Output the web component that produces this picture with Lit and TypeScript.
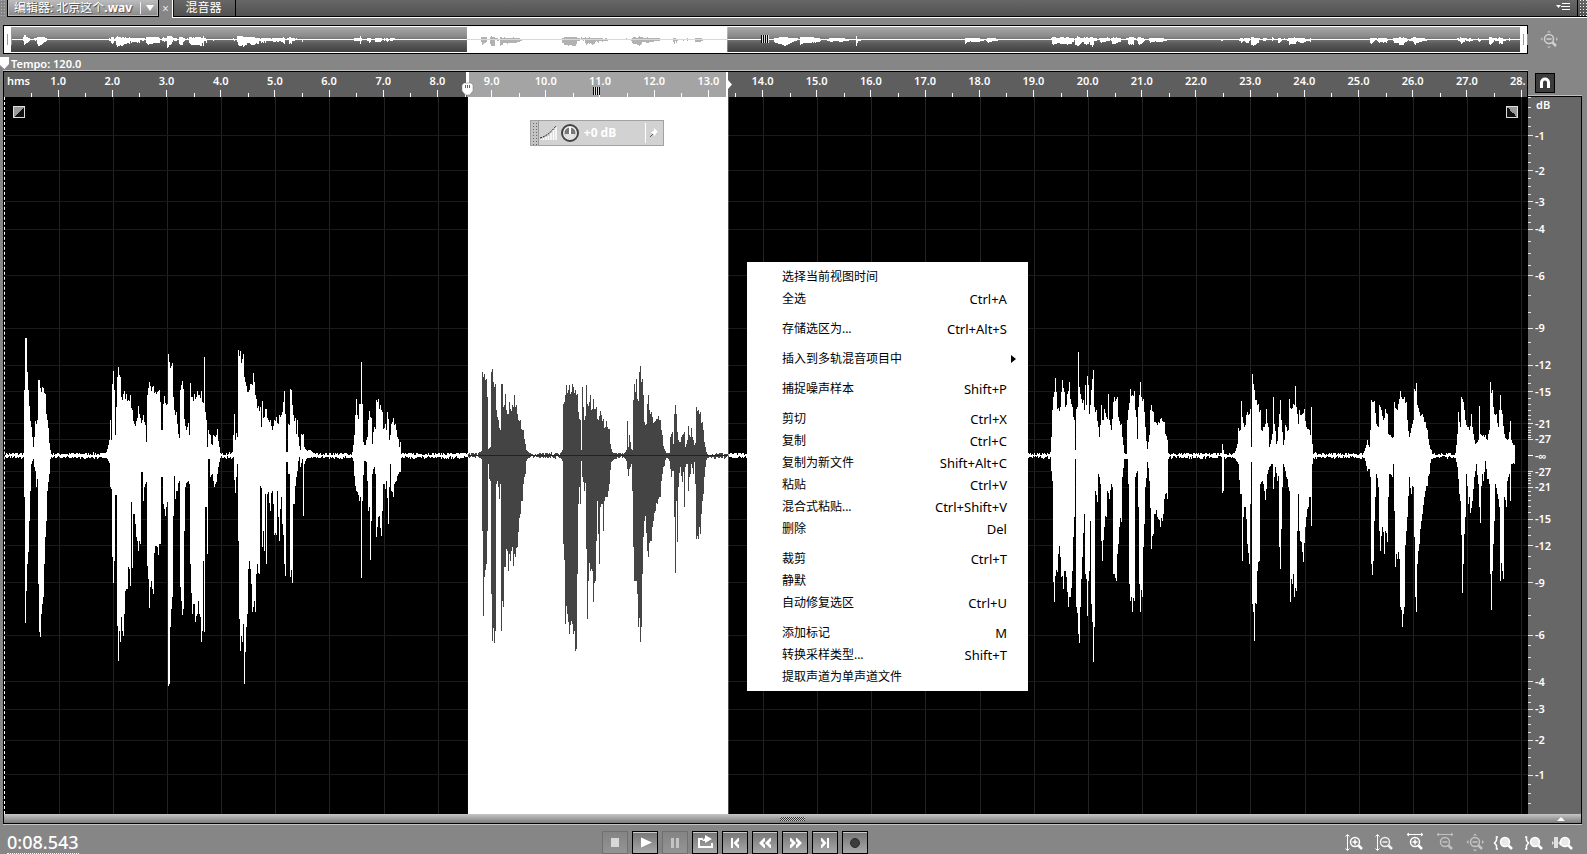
import { LitElement, html, svg, css, nothing } from "lit";
import { customElement, state } from "lit/decorators.js";

const DURATION = 28.11;
const SELECTION = { start: 8.545, end: 13.35 };
const VIEW_W = 4569;
const VIEW_H = 2148;
const COLUMN = 3;
const pct = (t: number) => (t / DURATION) * 100;

/* Envelopes of the spoken phrases: upper and lower outline as x,y pairs around a middle line. */
interface Phrase { x: number; sx: number; mid: number; top: string; bottom: string; }
const left = (top: string, bottom: string): Phrase => ({ x: -15, sx: 1, mid: 375, top, bottom });
const middle = (top: string, bottom: string): Phrase => ({ x: 1365, sx: 1, mid: 345, top, bottom });
const right = (top: string, bottom: string): Phrase => ({ x: 3060, sx: 1.0753, mid: 375, top, bottom });

const PHRASES: Phrase[] = [
  left(
    "72,350 73,180 75,180 76,22 80,22 81,125 85,180 89,228 93,290 97,320 100,350 104,320 107,272 112,270 114,180 116,150 119,150 121,172 126,170 130,172 136,190 140,250 146,292 150,360",
    "72,500 75,505 76,876 78,780 82,700 84,665 88,570 92,480 95,400 100,385 105,420 109,470 112,445 114,760 117,770 119,905 122,918 125,850 130,800 134,700 138,570 143,480 148,430 150,385"),
  left(
    "320,365 328,330 331,268 334,330 336,160 339,122 342,180 345,315 349,230 351,140 356,110 360,140 364,200 372,183 378,192 386,208 391,195 396,240 404,282 410,272 416,228 420,262 426,270 428,330 431,255 435,285 438,335 441,335 442,195 448,155 452,168 460,168 466,185 472,185 477,178 482,215 484,300 488,300 490,220 492,198 500,225 504,215 505,72 507,95 513,108 517,98 521,200 524,240 530,245 535,310 540,318 541,180 547,152 550,175 553,265 560,300 564,278 570,318 571,158 573,200 583,192 592,182 597,195 604,183 608,215 612,215 613,80 615,245 619,270 622,350 625,298 630,315 636,345 640,315 648,315 653,295 657,350 661,368",
    "320,380 330,400 332,470 337,480 338,680 340,758 343,690 345,492 350,492 351,520 353,885 356,990 360,935 363,860 366,900 370,915 374,850 378,775 383,775 385,710 391,765 394,515 397,712 400,550 404,550 410,620 416,662 420,640 423,425 428,425 430,510 434,470 437,460 441,460 443,705 448,832 452,770 460,790 465,645 470,645 475,672 482,640 484,440 488,440 490,520 496,555 500,530 504,530 506,1065 509,1060 512,890 518,800 522,435 526,505 532,480 537,450 540,520 541,770 546,852 549,835 552,600 556,470 562,455 569,460 571,700 576,850 580,820 586,875 592,850 600,860 604,935 607,900 609,690 613,905 615,530 620,530 621,670 622,385 628,385 632,440 637,430 643,470 650,455 656,410 661,378"),
  left(
    "698,365 703,250 706,330 709,308 713,320 714,58 718,78 722,62 727,85 731,70 735,155 740,168 746,185 750,160 755,160 760,127 763,155 768,205 775,228 780,230 783,290 787,212 790,262 796,235 800,235 803,262 812,270 818,300 824,268 830,260 834,280 838,255 845,255 851,215 854,182 857,250 860,365 864,365 865,280 870,280 871,175 875,180 880,255 885,262 888,310 892,268 895,320 900,360 905,310 911,310 913,350 920,360 930,358 945,370",
    "700,380 705,480 707,488 710,440 713,400 715,630 718,865 722,960 726,935 730,880 733,1060 737,965 742,850 745,715 752,715 757,845 765,845 770,730 779,730 781,465 786,480 787,650 790,600 794,660 797,490 799,700 802,490 806,485 810,540 816,480 820,520 823,490 824,612 828,612 832,480 838,630 843,500 848,580 853,700 857,735 860,395 864,395 866,430 870,440 872,740 877,757 880,520 884,520 888,440 892,420 897,380 902,410 907,385 910,555 912,400 920,385 945,378"),
  left(
    "1058,365 1065,300 1066,255 1069,205 1072,255 1078,255 1079,220 1082,220 1084,95 1086,220 1089,335 1095,345 1101,320 1104,270 1108,242 1113,262 1116,340 1122,290 1128,290 1129,210 1134,205 1138,235 1142,225 1148,245 1150,295 1155,280 1158,300 1162,245 1166,265 1169,330 1175,280 1180,262 1185,280 1190,300 1195,325 1199,350 1201,335 1205,370",
    "1060,390 1065,465 1070,480 1078,510 1083,515 1085,742 1088,510 1092,390 1098,395 1103,450 1104,540 1110,545 1112,688 1115,570 1118,430 1122,410 1127,430 1129,620 1133,590 1137,555 1144,615 1147,540 1150,460 1156,475 1160,450 1165,580 1168,470 1171,400 1174,480 1180,500 1184,460 1190,450 1194,430 1200,425 1205,380"),
  middle(
    "55,338 66,330 67,95 72,100 76,120 80,115 83,170 86,325 92,320 93,95 97,85 99,125 103,140 106,130 109,210 115,240 120,270 123,270 124,130 127,130 130,200 134,195 136,160 139,210 145,220 147,185 152,205 157,195 161,200 164,165 168,195 173,220 180,240 185,265 191,270 195,310 200,330 210,340",
    "55,350 65,355 68,570 70,825 74,710 80,670 82,570 84,370 87,415 92,420 94,760 97,900 103,908 106,870 108,430 113,420 118,475 122,430 123,760 125,870 129,800 131,700 135,680 139,625 145,690 150,660 155,630 161,675 166,650 172,620 175,575 180,520 186,480 190,430 195,400 200,360 210,348"),
  middle(
    "300,338 308,330 310,190 315,165 320,135 325,150 329,135 333,155 338,130 345,150 350,165 353,160 356,215 360,240 364,330 366,330 367,140 370,200 374,240 378,215 379,135 383,190 387,185 391,165 395,210 400,175 405,205 410,200 414,240 420,212 425,225 430,235 435,260 440,242 447,265 452,310 456,335 475,340",
    "300,350 308,360 310,610 315,700 316,850 321,820 325,845 329,880 334,840 340,880 346,930 350,925 352,700 354,490 358,440 361,490 364,360 368,410 374,450 378,430 379,625 382,835 386,720 390,640 392,690 396,690 400,785 405,720 409,600 412,480 415,580 418,670 421,500 426,490 430,570 433,480 437,470 443,470 449,430 453,365 475,348"),
  middle(
    "490,340 500,330 502,242 504,320 509,285 514,325 518,330 519,180 522,130 526,155 529,115 532,175 537,160 538,95 541,78 546,115 549,165 553,245 558,250 561,190 565,165 568,210 575,215 582,245 588,235 595,228 602,240 606,285 612,325 620,338 628,338 631,290 636,275 641,310 643,220 647,195 650,220 654,300 660,305 666,285 672,275 676,320 682,300 685,258 690,290 695,262 699,300 704,315 708,300 709,200 715,210 720,215 726,245 731,270 735,320 742,340",
    "490,350 500,360 504,405 510,380 516,370 518,450 520,620 524,720 532,760 536,860 540,903 544,860 548,700 552,540 557,525 561,630 565,650 570,600 574,600 580,540 585,510 592,490 600,470 604,420 612,375 620,348 628,360 634,410 639,390 642,530 646,698 649,480 652,605 656,440 660,380 666,425 672,390 674,500 677,380 681,370 685,450 690,400 695,370 700,400 704,365 707,430 709,595 715,595 720,580 725,520 731,460 735,380 742,348"),
  middle(
    "935,340 945,250 955,190 965,140 985,150 1000,200 1015,250 1021,320 1023,120 1060,160 1080,200 1086,290 1100,320 1115,230 1150,240 1170,280 1188,300 1192,80 1196,260 1215,300 1255,335",
    "935,350 942,430 948,640 962,760 980,900 996,620 1010,480 1021,370 1023,780 1040,650 1080,600 1086,400 1100,380 1115,560 1130,480 1150,550 1170,430 1190,420 1193,940 1197,480 1215,400 1255,350"),
  middle(
    "1515,335 1520,200 1545,180 1565,260 1580,300 1587,190 1605,240 1640,330",
    "1515,350 1518,690 1530,520 1560,560 1578,400 1587,640 1600,500 1620,430 1640,350"),
  right(
    "70,365 75,320 76,240 80,200 84,142 88,185 92,235 98,230 101,185 105,150 109,185 114,230 119,190 124,155 128,205 133,230 137,270 140,370 142,360 144,235 147,230 149,65 151,170 156,190 162,210 165,240 168,165 171,225 174,138 178,165 181,250 185,180 188,145 191,118 194,230 200,240 204,290 209,320 213,225 217,270 223,235 230,265 233,190 237,270 242,300 247,215 251,200 257,200 261,260 268,280 273,320 277,370 285,370 287,270 290,240 294,175 305,182 310,260 314,325 318,230 320,195 323,155 326,200 332,205 336,290 341,355 347,315 349,240 353,225 358,245 363,275 372,275 380,262 388,275 393,310 398,330 400,368",
    "70,380 76,450 79,755 82,815 86,735 91,725 93,670 99,680 101,740 107,775 113,720 118,785 122,830 128,800 133,720 137,560 140,385 143,440 145,830 149,910 152,938 156,830 161,680 166,550 170,730 175,855 179,720 182,570 185,820 191,993 193,890 196,480 202,515 206,430 211,460 213,630 217,692 222,590 227,560 230,480 236,505 241,460 245,470 247,730 255,752 260,640 264,590 270,575 273,440 277,385 285,385 290,460 292,760 294,810 300,845 305,810 309,440 314,420 317,530 319,760 323,845 327,800 332,650 337,470 343,395 348,450 353,655 358,610 362,550 370,560 378,590 385,570 391,490 398,505 400,385"),
  right("549,372 551,340 553,360 556,372", "549,378 551,487 553,480 556,378"),
  right(
    "585,368 594,340 596,292 601,300 604,212 608,260 613,290 618,255 622,245 625,250 629,235 631,350 634,350 635,130 640,180 645,210 651,220 656,240 660,300 665,290 670,280 673,235 678,290 683,350 690,310 693,200 697,280 703,340 708,290 712,208 716,270 722,345 728,285 735,300 738,205 743,235 748,220 752,225 755,168 759,250 765,290 767,240 773,250 780,235 785,290 795,300 798,320 800,230 803,340 806,370",
    "585,382 596,400 600,490 604,490 606,690 611,530 616,530 620,640 625,700 629,520 632,395 634,560 636,820 640,930 645,820 650,720 655,690 658,460 665,460 672,508 677,430 684,405 690,400 694,475 698,410 705,450 709,430 711,650 714,715 718,470 722,400 730,440 737,480 740,815 745,760 749,730 753,800 757,780 760,600 762,490 765,600 770,630 777,695 783,590 790,530 796,500 800,585 803,400 806,382"),
  right(
    "945,368 952,345 955,330 960,350 964,300 966,210 976,212 981,280 987,290 990,225 996,240 1000,270 1006,235 1012,250 1015,310 1021,315 1028,320 1032,215 1037,235 1043,220 1047,183 1053,205 1058,200 1064,215 1067,270 1073,320 1080,280 1086,250 1088,175 1092,158 1096,225 1102,245 1110,250 1116,275 1123,300 1128,345 1133,360",
    "948,382 955,420 960,415 965,440 966,700 969,733 973,690 977,500 981,430 987,470 990,600 993,660 998,590 1003,670 1007,600 1011,635 1014,500 1018,430 1024,440 1028,400 1032,540 1034,710 1038,685 1045,685 1049,830 1054,888 1058,830 1063,600 1068,560 1072,440 1077,490 1083,470 1087,620 1089,800 1092,845 1096,700 1100,640 1107,570 1115,500 1122,465 1128,430 1133,385"),
  right(
    "1200,368 1208,310 1210,245 1214,290 1219,200 1224,215 1229,270 1236,290 1241,300 1246,250 1250,310 1257,340 1264,330 1268,228 1272,310 1279,315 1285,315 1290,330 1295,300 1298,155 1303,180 1308,230 1315,250 1320,290 1324,240 1327,195 1330,240 1333,250 1337,310 1345,330 1350,325 1354,272 1358,330 1365,345 1371,350 1375,335 1380,360 1388,372",
    "1200,382 1208,410 1211,490 1216,510 1220,787 1223,700 1228,560 1232,430 1237,520 1240,500 1244,548 1248,510 1255,440 1260,400 1264,460 1270,577 1275,430 1280,450 1285,390 1290,445 1296,460 1298,730 1301,838 1305,720 1309,570 1312,460 1318,490 1323,530 1325,400 1327,750 1331,720 1335,745 1338,500 1343,530 1347,450 1352,430 1355,510 1358,400 1365,400 1374,415 1380,385 1388,378"),
];

type Point = [number, number];

/* Height of an outline within one drawn column: its peak there, or the line between neighbours. */
function columnHeight(points: Point[], from: number, jitter: number): number {
  const inside = points.filter(([x]) => x >= from && x < from + COLUMN);
  if (inside.length) return Math.max(...inside.map(([, h]) => h));
  const at = from + COLUMN / 2;
  const i = points.findIndex(([x]) => x > at);
  if (i < 1) return 0;
  const [x0, h0] = points[i - 1];
  const [x1, h1] = points[i];
  return (h0 + ((h1 - h0) * (at - x0)) / (x1 - x0)) * (1 - jitter * 0.1);
}

function buildWave(): string {
  const mid = VIEW_H / 2;
  const count = Math.ceil(4530 / COLUMN);
  let seed = 7;
  const rnd = () => (seed = (seed * 16807) % 2147483647) / 2147483647;
  const up = Array.from({ length: count }, () => 1 + rnd() * 8);
  const down = Array.from({ length: count }, () => 2 + rnd() * 8);
  for (const p of PHRASES) {
    const read = (s: string, sign: number): Point[] =>
      s.split(" ").map((pair) => {
        const [x, y] = pair.split(",").map(Number);
        return [p.x + x * p.sx, (y - p.mid) * sign];
      });
    const top = read(p.top, -1);
    const bottom = read(p.bottom, 1);
    const first = Math.floor(top[0][0] / COLUMN);
    const last = Math.ceil(top[top.length - 1][0] / COLUMN);
    for (let c = first; c <= last && c < count; c++) {
      up[c] = Math.max(up[c], columnHeight(top, c * COLUMN, rnd()));
      down[c] = Math.max(down[c], columnHeight(bottom, c * COLUMN, rnd()));
    }
  }
  let d = `M0 ${mid}`;
  up.forEach((h, c) => (d += `V${(mid - h).toFixed(1)}H${(c + 1) * COLUMN}`));
  for (let c = count - 1; c >= 0; c--) d += `V${(mid + down[c]).toFixed(1)}H${c * COLUMN}`;
  return d + "Z";
}
const WAVE = buildWave();

const DB_LABELS = [1, 2, 3, 4, 6, 9, 12, 15, 21, 27];
const DB_MINOR: number[] = [];
for (let d = 0; d < 27; d += d < 4 ? 0.25 : d < 6 ? 0.5 : 1) DB_MINOR.push(d);
const amp = (db: number) => 50 * Math.pow(10, -db / 20);

interface Item { label: string; key?: string; sub?: boolean; end?: boolean; }
const MENU: Item[] = [
  { label: "选择当前视图时间" },
  { label: "全选", key: "Ctrl+A", end: true },
  { label: "存储选区为...", key: "Ctrl+Alt+S", end: true },
  { label: "插入到多轨混音项目中", sub: true, end: true },
  { label: "捕捉噪声样本", key: "Shift+P", end: true },
  { label: "剪切", key: "Ctrl+X" },
  { label: "复制", key: "Ctrl+C" },
  { label: "复制为新文件", key: "Shift+Alt+C" },
  { label: "粘贴", key: "Ctrl+V" },
  { label: "混合式粘贴...", key: "Ctrl+Shift+V" },
  { label: "删除", key: "Del", end: true },
  { label: "裁剪", key: "Ctrl+T" },
  { label: "静默" },
  { label: "自动修复选区", key: "Ctrl+U", end: true },
  { label: "添加标记", key: "M" },
  { label: "转换采样类型...", key: "Shift+T" },
  { label: "提取声道为单声道文件" },
];

const TRANSPORT = [
  { name: "停止", off: true, icon: svg`<rect x="8" y="6" width="8" height="9" fill="#d8d8d8"/>` },
  { name: "播放", off: false, icon: svg`<path d="M8 5.500L19 10.500L8 15.500Z" fill="#fff"/>` },
  { name: "暂停", off: true, icon: svg`<path d="M8 6h3v10H8zM13 6h3v10h-3z" fill="#c4c4c4"/>` },
  { name: "循环播放", off: false, icon: svg`<path d="M10 7H6V15H19V11" fill="none" stroke="#fff" stroke-width="2"/><path d="M9 9l3-3V3l7 4l-7 4V9z" fill="#fff"/>` },
  { name: "移到上一个", off: false, icon: svg`<path d="M8 6h2v10H8zM16 6v3L14 11l2 2v3h-1L10.500 11l4.500-5z" fill="#fff"/>` },
  { name: "倒放", off: false, icon: svg`<path d="M12 6v3L10 11l2 2v3h-1L6 11l5-5zM18 6v3L16 11l2 2v3h-1L12 11l5-5z" fill="#fff"/>` },
  { name: "快进", off: false, icon: svg`<path d="M7 6v3L9 11l-2 2v3h1L13 11l-5-5zM13 6v3L15 11l-2 2v3h1L19 11l-5-5z" fill="#fff"/>` },
  { name: "移到下一个", off: false, icon: svg`<path d="M14 6h2v10h-2zM8 6v3L10 11l-2 2v3h1L13.500 11L9 6z" fill="#fff"/>` },
  { name: "录制", off: false, icon: svg`<circle cx="12" cy="11" r="4.500" fill="#3c3c3c" stroke="#2a2a2a"/>` },
];

const lens = (sign: string, color: string) => svg`
  <circle cx="13" cy="10" r="4.500" fill=${sign === "" ? "#e8e8e8" : "none"} stroke=${color} stroke-width="1.500"/>
  <path d="M16.500 13.500L20 17" stroke=${color} stroke-width="2.500"/>
  <path d=${sign} stroke=${color} stroke-width="1.500"/>`;
const PLUS = "M10.500 10h5M13 7.500v5";
const MINUS = "M10.500 10h5";
const ARROWS_V = svg`<path d="M5.500 3v15M3.500 4.500l2-2l2 2M3.500 16.500l2 2l2-2" fill="none" stroke="#fff"/>`;
const arrowsH = (c: string) => svg`<path d="M5 2.500h16M7 1L5 2.500L7 4M19 1l2 1.500L19 4" fill="none" stroke=${c}/>`;
const CROSS = (c: string) => svg`<path d="M11 3.500l2-2l2 2zM11 17.500l2 2l2-2zM6.500 8l-2 2l2 2zM20 8l2 2l-2 2z" fill=${c}/>`;

const ZOOMS = [
  { name: "放大（振幅）", icon: svg`${ARROWS_V}${lens(PLUS, "#fff")}` },
  { name: "缩小（振幅）", icon: svg`${ARROWS_V}${lens(MINUS, "#f0f0f0")}` },
  { name: "放大（时间）", icon: svg`${arrowsH("#fff")}${lens(PLUS, "#fff")}` },
  { name: "缩小（时间）", icon: svg`${arrowsH("#c0c0c0")}${lens(MINUS, "#c0c0c0")}` },
  { name: "全部缩小", icon: svg`${CROSS("#c4c4c4")}${lens(MINUS, "#c4c4c4")}` },
  { name: "放大入点", icon: svg`<path d="M6 5H4.500v3.500L2.500 11l2 2.500V17H6" fill="none" stroke="#fff" stroke-width="1.500"/>${lens("", "#fff")}` },
  { name: "放大出点", icon: svg`<path d="M3 5h1.500v3.500L6.500 11l-2 2.500V17H3" fill="none" stroke="#fff" stroke-width="1.500"/>${lens("", "#fff")}` },
  { name: "缩放至选区", icon: svg`<path d="M2 5h4v11H2zM-1 8v6l3-3zM9 8v6l-3-3z" fill="#e0e0e0"/>${lens("", "#fff")}` },
];

@customElement("app-root")
export class AppRoot extends LitElement {
  static styles = css`
    :host {
      display: flex; flex-direction: column; height: 100vh; min-height: 600px; overflow: hidden;
      background: #868686; color: #fff;
      font: 600 11px/16px "Noto Sans", "Noto Sans CJK SC", sans-serif;
    }
    * { box-sizing: border-box; }
    button { font: inherit; color: inherit; background: none; border: 0; padding: 0; margin: 0; cursor: default; }
    svg { display: block; }
    .tabs { display: flex; height: 18px; flex: none; font-size: 12px; font-weight: 400; }
    .grip { width: 7px; background: radial-gradient(circle, #ddd 0 1px, transparent 1px) 0 2px / 3px 3px; opacity: .6; }
    .tab-main { display: flex; border: 1px solid #000; border-top: 0; outline: 1px solid #b8b8b8; outline-offset: -2px;
      width: 152px; height: 17px; background: linear-gradient(#bcbcbc, #898989); }
    .tab-name { flex: 1; text-align: left; padding-left: 6px; line-height: 16px; white-space: nowrap; text-shadow: 1px 1px 0 #555; }
    .drop { width: 18px; border-left: 1px solid #eee; display: grid; place-items: center; margin: 2px 0; }
    .close { width: 13px; line-height: 14px; color: #e4e4e4; }
    .strip { flex: 1; display: flex; border-left: 1px solid #fff; border-bottom: 1px solid #fff; }
    .strip-in { flex: 1; display: flex; border-left: 1px solid #111; border-bottom: 1px solid #000;
      background: linear-gradient(#676767, #515151); }
    .tab-other { width: 62px; border-right: 1px solid #000; line-height: 16px; padding-right: 2px; }
    .panel-menu { margin-left: auto; width: 28px; border-right: 1px solid #000; padding-left: 6px; }
    .end-grip { width: 9px; background: radial-gradient(circle, #eee 0 1px, transparent 1px) 4px 2px / 3px 3px; }
    .panel { flex: 1; min-height: 0; display: grid; padding: 7px 5px 0 3px;
      grid-template-columns: minmax(0, 1fr) 54px; grid-template-rows: 29px 17px 26px minmax(0, 1fr) 11px; }
    .overview { position: relative; border: 1px solid #000; background: #fff; padding: 1px 0; }
    .overview-in { height: 100%; background: linear-gradient(#a8a8a8, #8c8c8c 35%, #5c5c5c 65%, #404040); }
    .stretch { width: 100%; height: 100%; }
    .handle { position: absolute; top: 0; bottom: 0; width: 7px; background: #fff; left: 0; }
    .handle::after { content: ""; position: absolute; left: 3px; top: 8px; bottom: 8px; width: 3px; border: 1px solid #999; border-width: 0 1px; }
    .handle-end { left: auto; right: 0; }
    .ticks3 { position: absolute; width: 8px; height: 8px; background: repeating-linear-gradient(90deg, #000 0 1px, #ddd 1px 2px); }
    .on-overview { top: 9px; left: 49.700%; }
    .on-ruler { bottom: 2px; left: 38.700%; width: 7px; }
    .fit { display: grid; place-items: center; padding-right: 14px; }
    .tempo { grid-column: 1 / -1; padding-left: 8px; line-height: 19px; position: relative; }
    .pin { position: absolute; left: -3px; top: 3px; z-index: 2; }
    .ruler { position: relative; display: grid; background: #5e5e5e; border: 1px solid #000; border-bottom: 0;
      box-shadow: 0 -1px 0 #c4c4c4;
      grid-template-columns: minmax(0, .5fr) repeat(27, minmax(0, 1fr)) minmax(0, .61fr); }
    .range { position: absolute; top: 0; bottom: 0; background: #a4a4a4; }
    .cell { position: relative; text-align: center; line-height: 18px; white-space: nowrap;
      background: linear-gradient(#fff, #fff) 50% 100% / 1px 7px no-repeat, linear-gradient(#fff, #fff) 0 100% / 1px 4px no-repeat; }
    .cell-first { background: none; text-align: left; padding-left: 3px; }
    .cell-last { text-align: left; padding-left: 16px; background-position: 27px 100%, 0 100%; }
    .snap-box { padding: 2px 0 0 7px; }
    .snap { width: 20px; height: 20px; background: #3c3c3c; border: 1px solid #000; display: grid; place-items: center; }
    .stage-wrap { position: relative; border-left: 1px solid #000; background: #000; }
    .edge { position: absolute; left: 0; top: 0; bottom: 0; border-left: 1px dashed #fff; z-index: 1; }
    .stage { padding-left: 1px; height: 100%; }
    .corner { position: absolute; top: 9px; width: 12px; height: 12px; border: 1px solid #ddd;
      background: linear-gradient(135deg, #999 50%, #111 50%); }
    .corner-l { left: 9px; }
    .corner-r { right: 10px; background: linear-gradient(45deg, #111 50%, #999 50%); }
    .mark { position: absolute; top: 0; z-index: 1; }
    .db { background: #676767; border-right: 1px solid #000; border-top: 1px solid #000; box-shadow: 0 -1px 0 #c0c0c0; margin-top: -1px; }
    .db text { fill: #fff; font: 600 11px "Noto Sans", sans-serif; }
    .hud { position: absolute; left: 34.500%; top: 23px; width: 134px; height: 26px; display: flex; align-items: center;
      border: 1px solid #a2a2a2; background: #d2d2d2; }
    .hud-grip { width: 8px; height: 100%; border-right: 1px solid #999; background: radial-gradient(circle, #666 0 1px, transparent 1px) 1px 1px / 3px 3px #c4c4c4; }
    .hud-value { flex: 1; font: 700 12px/16px "Noto Sans", sans-serif; padding-left: 3px; text-align: left; }
    .hud-pin { border-left: 1px solid #fff; width: 18px; height: 20px; display: grid; place-items: center; }
    .menu { position: absolute; left: 48.750%; top: 165px; width: 281px; background: #fff; color: #000; padding: 4px 0 3px;
      font: 400 12px/22px "Noto Sans", "Noto Sans CJK SC", sans-serif; display: flex; flex-direction: column; z-index: 3; }
    .item { display: flex; justify-content: space-between; align-items: center; height: 22px; padding: 0 21px 0 35px; white-space: nowrap; }
    .item:hover { background: #eee; }
    .key { font-size: 13px; }
    .group-end { margin-bottom: 8px; }
    .item-sub { padding-right: 12px; }
    .scroll { grid-column: 1 / -1; display: flex; align-items: center; border: 1px solid #000; border-top: 0; margin-bottom: 1px;
      box-shadow: 0 1px 0 #c4c4c4; background: linear-gradient(#c6c6c6, #7c7c7c); }
    .scroll-grip { width: 25px; height: 4px; margin-left: 49.200%; background: repeating-conic-gradient(#333 0 25%, #ccc 0 50%) 0 0 / 2px 2px; }
    .scroll-up { margin-left: auto; width: 40px; display: grid; place-items: center; }
    .foot { flex: none; display: grid; grid-template-columns: 38.150% auto 1fr; height: 29px; padding-right: 9px; }
    .time { padding: 7px 0 0 7px; }
    .time-value { font: 500 18px/21px "Noto Sans", sans-serif; border-bottom: 1px dotted #fff; }
    .transport { display: flex; gap: 4px; padding-top: 6px; }
    .tbtn { width: 26px; height: 23px; border: 1px solid #000; box-shadow: inset 0 1px 0 #ccc;
      background: linear-gradient(#747474, #a8a8a8); }
    .tbtn-off { border-color: #707070; box-shadow: none; background: linear-gradient(#848484, #949494); }
    .zooms { display: flex; justify-content: flex-end; gap: 4px; padding-top: 7px; }
    .zbtn { width: 26px; height: 21px; }
  `;

  @state() private snapping = true;

  private wave(kind: "main" | "over") {
    const a = (pct(SELECTION.start) / 100) * VIEW_W;
    const b = (pct(SELECTION.end) / 100) * VIEW_W;
    const grid = kind === "main";
    return html`<svg class="stretch" viewBox="0 0 ${VIEW_W} ${VIEW_H}" preserveAspectRatio="none" shape-rendering="crispEdges" role="img" aria-label="波形">
      <defs><clipPath id="sel-${kind}"><rect x=${a} y="0" width=${b - a} height=${VIEW_H}></rect></clipPath></defs>
      ${grid ? svg`<g fill="#222">
        ${Array.from({ length: 28 }, (_, i) => svg`<rect x=${((i + 1) / DURATION) * VIEW_W - 2} y="0" width="3" height=${VIEW_H}></rect>`)}
        ${DB_LABELS.flatMap((d) => [50 - amp(d), 50 + amp(d)]).map((p) => svg`<rect x="0" y=${(p / 100) * VIEW_H - 2} width=${VIEW_W} height="3" fill="#1a1a1a"></rect>`)}
      </g>` : svg`<rect x="0" y=${VIEW_H / 2 - 42} width=${VIEW_W} height="84" fill="#fff"></rect>`}
      <path d=${WAVE} fill="#fff"></path>
      <g clip-path="url(#sel-${kind})">
        <rect x="0" y="0" width=${VIEW_W} height=${VIEW_H} fill="#fff"></rect>
        <path d=${WAVE} fill=${grid ? "#444" : "#b2b2b2"}></path>
        <rect x="0" y=${VIEW_H / 2 - (grid ? 1 : 42)} width=${VIEW_W} height=${grid ? 3 : 84} fill=${grid ? "#222" : "#d8d8d8"}></rect>
      </g>
    </svg>`;
  }

  render() {
    const lines = [...DB_MINOR.map((d) => ({ d, w: 3 })), ...DB_LABELS.map((d) => ({ d, w: 5 }))];
    return html`
      <header class="tabs">
        <span class="grip"></span>
        <div class="tab-main">
          <button class="tab-name">编辑器: 北京这个<b>.wav</b></button>
          <button class="drop" aria-label="文件列表"><svg width="10" height="6"><path d="M1 0h8L5 6z" fill="#fff"/></svg></button>
        </div>
        <button class="close" aria-label="关闭">×</button>
        <div class="strip"><div class="strip-in">
          <button class="tab-other">混音器</button>
          <button class="panel-menu" aria-label="面板菜单"><svg width="14" height="14"><path d="M0 4h5L2.500 7z" fill="#fff"/><path d="M6 2.500h8M5 5.500h9M6 8.500h8" stroke="#fff"/></svg></button>
          <span class="end-grip"></span>
        </div></div>
      </header>
      <main class="panel">
        <div class="overview">
          <div class="overview-in">${this.wave("over")}</div>
          <span class="handle"></span><span class="handle handle-end"></span>
          <span class="ticks3 on-overview"></span>
        </div>
        <button class="fit" aria-label="全部缩小"><svg width="24" height="22" viewBox="0 0 24 22">${CROSS("#bcbcbc")}${lens(MINUS, "#d0d0d0")}</svg></button>
        <div class="tempo">Tempo: 120.0
          <svg class="pin" width="9" height="13"><path d="M0 0h9v7L4.500 12L0 8z" fill="#fff"/></svg>
        </div>
        <div class="ruler">
          <span class="range" style="left:${pct(SELECTION.start)}%;width:${pct(SELECTION.end - SELECTION.start)}%"></span>
          <span class="cell cell-first">hms</span>
          ${Array.from({ length: 27 }, (_, i) => html`<span class="cell">${i + 1}.0</span>`)}
          <span class="cell cell-last">28.</span>
          <span class="ticks3 on-ruler"></span>
          <svg class="mark" style="left:calc(${pct(SELECTION.start)}% - 6px)" width="13" height="26"><path d="M5 0h3v12H5z" fill="#fff"/><path d="M1 13l2-2h7l2 2v6l-3.500 4h-4L1 19z" fill="#fff" stroke="#777" stroke-width=".5"/><path d="M4.500 13v3M6.500 13v3M8.500 13v3" stroke="#666"/></svg>
          <svg class="mark" style="left:calc(${pct(SELECTION.end)}% - 1px)" width="7" height="26"><path d="M0 0h2v8l4 4.500L2 17v9H0z" fill="#fff"/></svg>
        </div>
        <div class="snap-box">
          <button class="snap" aria-label="吸附" aria-pressed=${this.snapping ? "true" : "false"} @click=${() => (this.snapping = !this.snapping)}>
            <svg width="12" height="12"><path d="M2.500 11V5.500a3.500 3.500 0 0 1 7 0V11" fill="none" stroke="#fff" stroke-width="3"/></svg>
          </button>
        </div>
        <div class="stage-wrap">
          <span class="edge"></span>
          <div class="stage">${this.wave("main")}</div>
          <span class="corner corner-l"></span><span class="corner corner-r"></span>
          <div class="hud">
            <span class="hud-grip"></span>
            <svg width="18" height="18"><path d="M2 16v-1M4.500 16v-2M7 16v-3M9.500 16v-4M12 16v-7M14.500 16v-10M17 16V3" stroke="#fff" stroke-width="1.500"/><path d="M1 14C8 12 12 8 17 2" fill="none" stroke="#222" stroke-dasharray="2 1"/></svg>
            <svg width="24" height="20"><circle cx="13" cy="10" r="8" fill="#eee" stroke="#444" stroke-width="2"/><circle cx="13" cy="10" r="5.500" fill="#777"/><path d="M8 11a5 5 0 0 0 10 0z" fill="#e4e4e4"/><path d="M13 4v7" stroke="#fff" stroke-width="2"/></svg>
            <button class="hud-value">+0 dB</button>
            <button class="hud-pin" aria-label="固定"><svg width="10" height="12"><path d="M5 1l4 4l-2 1l-1 3l-4-4l3-1z" fill="#fff"/><path d="M4 7L1 10" stroke="#555"/></svg></button>
          </div>
          <nav class="menu" role="menu">
            ${MENU.map((m) => html`<button role="menuitem" class="item ${m.end ? "group-end" : ""} ${m.sub ? "item-sub" : ""}">
              <span>${m.label}</span>
              ${m.key ? html`<span class="key">${m.key}</span>` : m.sub ? html`<svg width="5" height="8"><path d="M0 0l5 4l-5 4z"/></svg>` : nothing}
            </button>`)}
          </nav>
        </div>
        <div class="db">
          <svg class="stretch" shape-rendering="crispEdges">
            ${lines.flatMap((l) => [50 - amp(l.d), 50 + amp(l.d)].map((y) => svg`<line x1="0" x2=${l.w} y1="${y}%" y2="${y}%" stroke="#e4e4e4"></line>`))}
            <line x1="0" x2="5" y1="50%" y2="50%" stroke="#fff"></line>
            <text x="8" y="12">dB</text>
            <text x="7" y="50%" dy="4">-∞</text>
            ${DB_LABELS.flatMap((d) => [50 - amp(d), 50 + amp(d)].map((y) => svg`<text x="7" y="${y}%" dy="4">-${d}</text>`))}
          </svg>
        </div>
        <div class="scroll">
          <span class="scroll-grip"></span>
          <span class="scroll-up"><svg width="8" height="4"><path d="M4 0l4 4H0z" fill="#fff"/></svg></span>
        </div>
      </main>
      <footer class="foot">
        <div class="time"><button class="time-value">0:08.543</button></div>
        <div class="transport">
          ${TRANSPORT.map((t) => html`<button class="tbtn ${t.off ? "tbtn-off" : ""}" aria-label=${t.name}><svg width="24" height="21">${t.icon}</svg></button>`)}
        </div>
        <div class="zooms">
          ${ZOOMS.map((z) => html`<button class="zbtn" aria-label=${z.name}><svg width="26" height="21">${z.icon}</svg></button>`)}
        </div>
      </footer>
    `;
  }
}
